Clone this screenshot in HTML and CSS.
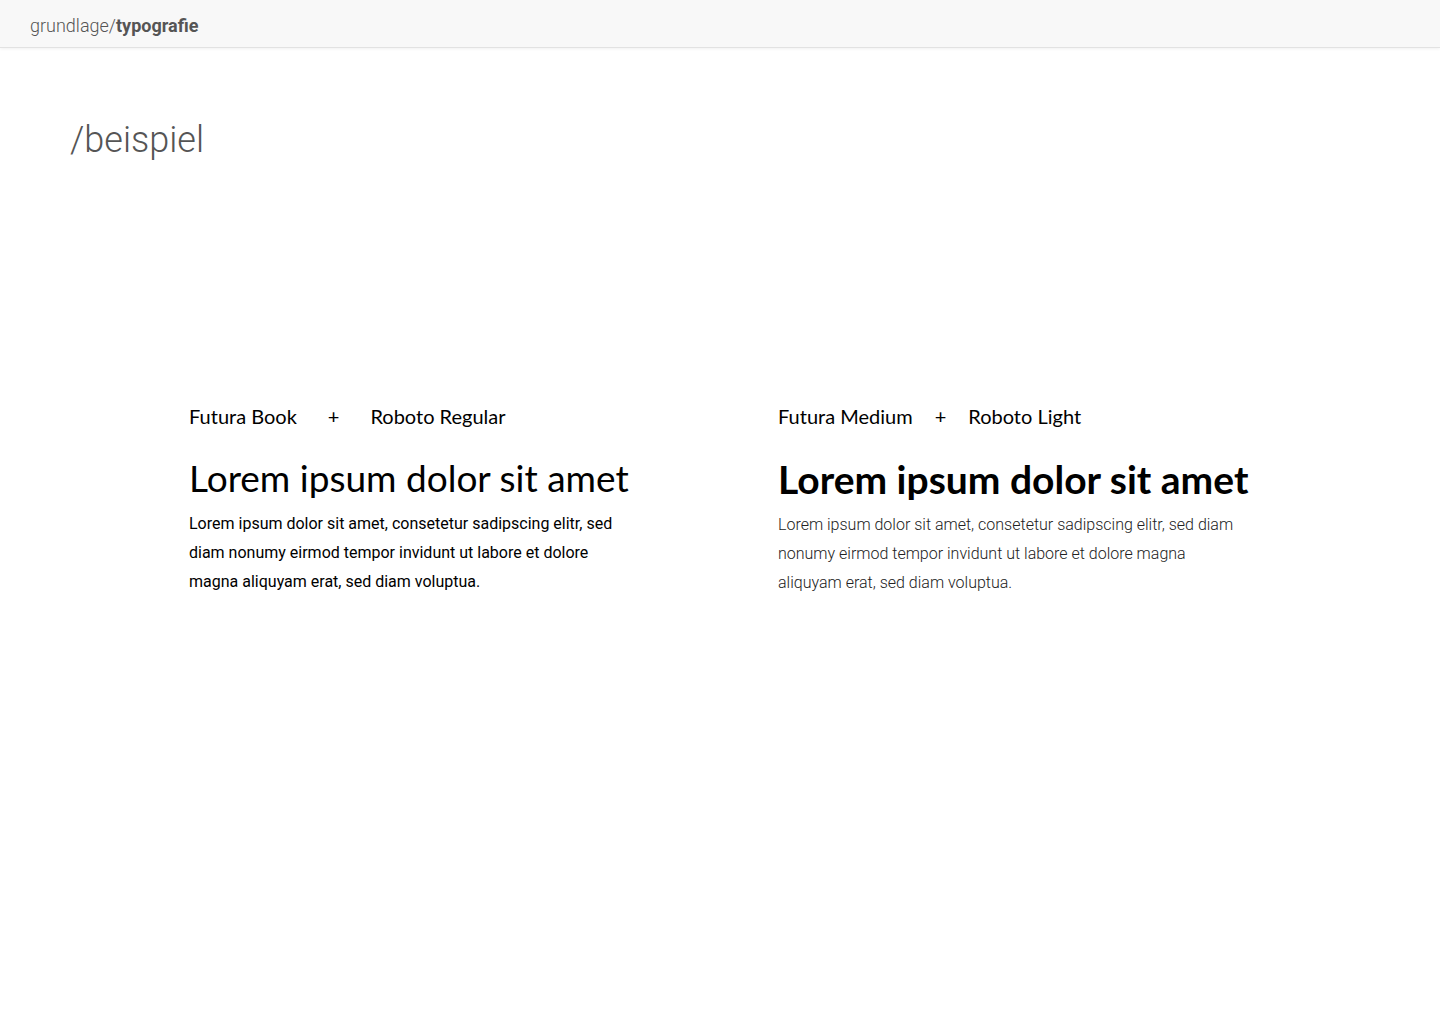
FILE: index.html
```html
<!DOCTYPE html>
<html lang="de">
<head>
<meta charset="utf-8">
<title>grundlage/typografie</title>
<link rel="stylesheet" href="styles.css">
</head>
<body>
<header class="topbar">
  <span class="crumb">grundlage/</span><span class="crumb-current">typografie</span>
</header>
<main class="page">
  <h1 class="page-title">/beispiel</h1>
  <section class="pairs">
    <article class="pair pair--book">
      <div class="pair-label">
        <span>Futura Book</span><span class="plus">+</span><span>Roboto Regular</span>
      </div>
      <h2 class="sample-head sample-head--book">Lorem ipsum dolor sit amet</h2>
      <p class="sample-body sample-body--regular">Lorem ipsum dolor sit amet, consetetur sadipscing elitr, sed diam nonumy eirmod tempor invidunt ut labore et dolore magna aliquyam erat, sed diam voluptua.</p>
    </article>
    <article class="pair pair--medium">
      <div class="pair-label">
        <span>Futura Medium</span><span class="plus">+</span><span>Roboto Light</span>
      </div>
      <h2 class="sample-head sample-head--medium">Lorem ipsum dolor sit amet</h2>
      <p class="sample-body sample-body--light">Lorem ipsum dolor sit amet, consetetur sadipscing elitr, sed diam nonumy eirmod tempor invidunt ut labore et dolore magna aliquyam erat, sed diam voluptua.</p>
    </article>
  </section>
</main>
</body>
</html>
```
FILE: styles.css
```css
html, body {
  margin: 0;
  padding: 0;
  background: #ffffff;
}
body {
  font-family: Roboto, "Liberation Sans", sans-serif;
  color: #000;
}
.topbar {
  height: 48px;
  box-sizing: border-box;
  background: #f8f8f8;
  border-bottom: 1px solid #e2e2e2;
  box-shadow: 0 1px 3px rgba(0,0,0,0.06);
  display: flex;
  align-items: center;
  padding: 4px 0 0 30px;
  font-size: 18px;
  color: #555;
}
.crumb { font-weight: 300; }
.crumb-current { font-weight: 700; color: #555; }

.page {
  padding: 0 0 0 70px;
}
.page-title {
  margin: 0;
  padding-top: 70px;
  font-family: Roboto, sans-serif;
  font-weight: 300;
  font-size: 36px;
  line-height: 44px;
  color: #555;
}
.pairs {
  display: flex;
  margin-left: 119px;
  margin-top: 240px;
  gap: 149px;
}
.pair--book { width: 440px; }
.pair--medium { width: 470px; }

.pair-label {
  display: flex;
  align-items: baseline;
  font-family: Lato, "Noto Sans", sans-serif;
  font-size: 20px;
  line-height: 28px;
}
.pair--book .pair-label { gap: 31px; }
.pair--medium .pair-label { gap: 22px; }

.sample-head {
  margin: 26px 0 0;
  font-family: Lato, "Noto Sans", sans-serif;
  font-size: 37px;
  line-height: 44px;
  font-weight: 400;
  white-space: nowrap;
}
.sample-head--medium {
  margin-top: 27px;
  font-size: 39px;
  font-weight: 700;
}

.sample-body {
  margin: 9px 0 0;
  font-family: Roboto, sans-serif;
  font-size: 16px;
  line-height: 29px;
}
.sample-body--regular { font-weight: 400; color: #000; }
.sample-body--light { font-weight: 300; color: #222; }
```
